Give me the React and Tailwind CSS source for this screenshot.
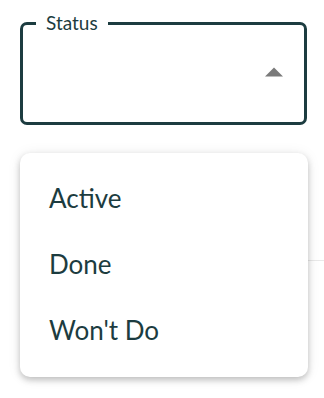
import React from "react";

export default function App() {
  const items = ["Active", "Done", "Won't Do"];
  return (
    <div
      className="relative w-[324px] h-[398px] bg-white overflow-hidden"
      style={{ fontFamily: "Lato, 'Noto Sans', sans-serif" }}
    >
      <div className="pt-[22px] pl-[20px]">
        <div className="relative w-[287px] h-[103px] border-[3px] border-[#1c3c40] rounded-[7px] flex items-center justify-end pr-[21px]">
          <span className="absolute -top-[14px] left-[13px] px-[10px] bg-white text-[19px] leading-[24px] text-[#1c3c40]">
            Status
          </span>
          <svg width="18" height="10" viewBox="0 0 18 10" className="mt-[-3px]">
            <path d="M0 9.5 L9 0.5 L18 9.5 Z" fill="#7a7a7a" />
          </svg>
        </div>
      </div>

      <div className="absolute left-[160px] right-0 top-[260px] h-px bg-[#e9e9e9]" />

      <div className="absolute left-[20px] top-[153px] w-[288px] h-[224px] bg-white rounded-[10px] shadow-[0_3px_6px_rgba(0,0,0,0.22),0_1px_14px_rgba(0,0,0,0.08)] pt-[12px] pb-[14px]">
        {items.map((t) => (
          <div
            key={t}
            className="h-[66px] flex items-center pl-[29px] text-[26px] text-[#1c3c40]"
          >
            {t}
          </div>
        ))}
      </div>
    </div>
  );
}
